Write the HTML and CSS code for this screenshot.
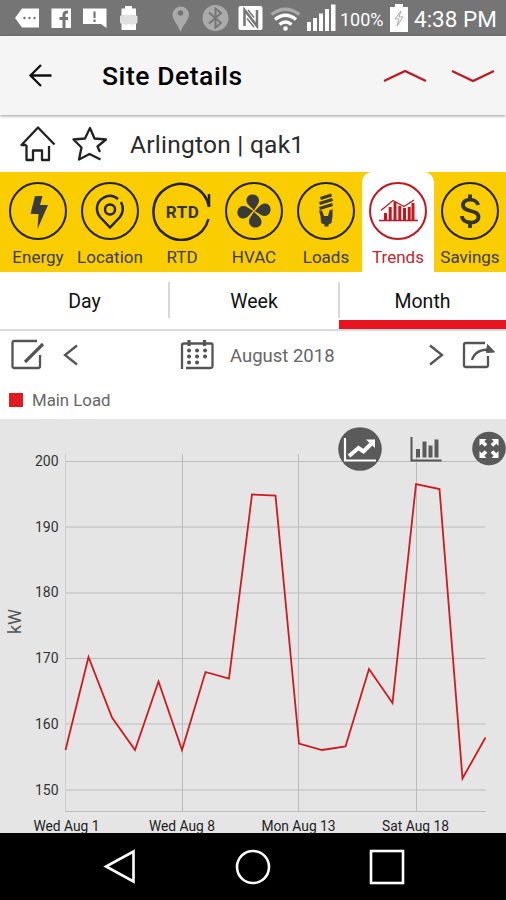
FILE: index.html
```html
<!DOCTYPE html>
<html lang="en">
<head>
  <meta charset="UTF-8">
  <meta name="viewport" content="width=device-width, initial-scale=1">
  <title>Site Details</title>
  <link rel="stylesheet" href="styles.css">
</head>
<body>
  <div class="status-bar">
    <svg class="status-notes" width="140" height="36" viewBox="0 0 140 36">
      <path d="M15 18 22 8.500H39V27.500H22Z" fill="#fff"/>
      <g fill="#757575"><circle cx="24.500" cy="18" r="1.200"/><circle cx="29.500" cy="18" r="1.200"/><circle cx="34.500" cy="18" r="1.200"/></g>
      <rect x="51.500" y="8.500" width="19.500" height="19.500" fill="#fff"/>
      <path d="M64 28V14.500Q64 12 68 12M59.500 18.500H68" fill="none" stroke="#757575" stroke-width="3"/>
      <path d="M83 8.500H106.500V28L101 24H83Z" fill="#fff"/>
      <path d="M94.500 11.500V18M94.500 19.500V22" stroke="#757575" stroke-width="2.200"/>
      <path d="M125 6H132V8.500H136V30H121.500V8.500H125Z" fill="#fff"/>
      <path d="M120 16Q124 13.500 128.500 15Q133 13.500 137.500 16V23Q133 26 128.500 24Q124 26 120 23Z" fill="#e0e0e0"/>
    </svg>
    <svg class="status-signals" width="168" height="36" viewBox="170 0 168 36">
      <path d="M180.500 32C178 25 172.500 20 172.500 14A8.300 8.300 0 0 1 189 14C189 20 183 25 180.500 32Z" fill="#aaa"/>
      <circle cx="180.500" cy="13" r="2.800" fill="#757575"/>
      <circle cx="215.500" cy="18" r="13" fill="#aaa"/>
      <path d="M209 12.500 221 23 215.500 27.500V8.500L221 13 209 23.500" fill="none" stroke="#757575" stroke-width="2"/>
      <rect x="238.500" y="6" width="24" height="24" rx="2" fill="#fff"/>
      <path d="M244.500 26V10L257 26V10" fill="none" stroke="#757575" stroke-width="2.500"/>
      <path d="M248 10 254 17.500M247 18.500 254 27" stroke="#757575" stroke-width="1.500"/>
      <g fill="none" stroke="#fff" stroke-width="3.200">
        <path d="M271.500 14.500Q285.500 4 299.500 14.500" stroke="#aaa"/>
        <path d="M275 19.500Q285.500 11 296 19.500M279.500 24.500Q285.500 19.500 291.500 24.500"/>
      </g>
      <circle cx="285.500" cy="28.500" r="2.300" fill="#fff"/>
      <g fill="#fff"><rect x="307" y="22" width="4" height="9"/><rect x="313" y="18" width="4" height="13"/><rect x="319" y="13.500" width="4" height="17.500"/><rect x="325" y="9" width="4" height="22"/><rect x="331" y="4.500" width="4.500" height="26.500"/></g>
    </svg>
    <span class="battery-level">100%</span>
    <svg class="battery" width="18" height="28" viewBox="0 0 18 28">
      <path d="M5 0H13V3H18V28H0V3H5Z" fill="#fff"/>
      <path d="M11 7 5 15H9L7 22 13 13H9Z" fill="none" stroke="#aaa"/>
    </svg>
    <span class="clock">4:38 PM</span>
  </div>

  <header class="app-bar">
    <svg class="back" width="24" height="24" viewBox="0 0 24 24"><path d="M23.500 11.500H2.500M13 1 2.500 11.500 13 22"/></svg>
    <h1>Site Details</h1>
    <svg class="arrow" width="44" height="14" viewBox="0 0 44 14"><path d="M1 12 22 2 43 12"/></svg>
    <svg class="arrow" width="44" height="14" viewBox="0 0 44 14"><path d="M1 2 22 12 43 2"/></svg>
  </header>

  <div class="site">
    <svg width="36" height="36" viewBox="0 0 36 36"><path d="M6.500 19H1.500L18 1.500 34.500 18.500M6.500 19V34H13V24.500H22V34H29V20"/></svg>
    <svg width="36" height="36" viewBox="0 0 36 36"><path d="M28 26 25.500 20.500 34 13.500 22.500 12.500 18 2 13 12.500 1.500 13.500 9.500 21.500 7 33.500 17.500 28 28.500 33.500"/></svg>
    <span class="site-name">Arlington | qak1</span>
  </div>

  <nav class="tabs">
    <div class="tab">
      <svg viewBox="0 0 60 60"><circle cx="30" cy="30" r="28"/><path class="fill" d="M27 15H34.500L32 24H40L29.500 48 30.500 33H22.500Z"/></svg>
      <span>Energy</span>
    </div>
    <div class="tab">
      <svg viewBox="0 0 60 60"><circle cx="30" cy="30" r="28"/><path class="thick" d="M38 18Q31 12 23 17C15 22 16 31 20 36L30 46.500 40 36Q45 29 41 21"/><circle class="thick" cx="30" cy="28.500" r="5"/></svg>
      <span>Location</span>
    </div>
    <div class="tab">
      <svg viewBox="0 0 60 60"><path class="thick" d="M57 26V13M57 26A28 28 0 1 0 56.500 38"/><text x="30.500" y="36.500" text-anchor="middle">RTD</text></svg>
      <span>RTD</span>
    </div>
    <div class="tab">
      <svg viewBox="0 0 60 60"><circle cx="30" cy="30" r="28"/>
        <g class="fill"><path id="blade" d="M30 29.500C28 26 22 24 22.500 18.500C23 12.500 32 11.500 34.500 17C36.500 22 32 25 30 29.500Z"/><use href="#blade" transform="rotate(90 30 30)"/><use href="#blade" transform="rotate(180 30 30)"/><use href="#blade" transform="rotate(270 30 30)"/></g>
      </svg>
      <span>HVAC</span>
    </div>
    <div class="tab">
      <svg viewBox="0 0 60 60"><circle cx="30" cy="30" r="28"/><path class="coil" d="M24.500 17.500 35.500 14M23.500 22.500 36.500 18.500M23.500 27.500 36.500 23.500"/><path class="fill" d="M23 29.500H26L28 35H32L33.500 29.500 36.500 28V35L35.500 42 32.500 43.500V45.500H28.500V43.500L25 42 24.500 35Z"/></svg>
      <span>Loads</span>
    </div>
    <div class="tab active">
      <svg viewBox="0 0 60 60"><circle cx="30" cy="30" r="28"/><path class="bars" d="M17.500 39V32M22.200 39V26M27 39V21M31.800 39V25M36.500 39V27M41.200 39V26M45 39V22"/><path class="thin" d="M11 39.500H50M13 29.500 25 19.500 36 25.500 46 19"/></svg>
      <span>Trends</span>
    </div>
    <div class="tab">
      <svg viewBox="0 0 60 60"><circle cx="30" cy="30" r="28"/><path class="dollar" d="M38 24C37 17 23 16.500 23 24C23 32 38.500 28 38.500 36C38.500 44 22 43 22 35M30 13.500V19M30 41V47"/></svg>
      <span>Savings</span>
    </div>
  </nav>

  <div class="periods">
    <div class="period">Day</div>
    <div class="period">Week</div>
    <div class="period selected">Month</div>
  </div>

  <div class="date-row">
    <svg class="edit" width="34" height="32" viewBox="0 0 34 32"><path d="M26 2H3Q1.500 2 1.500 4V27Q1.500 29 3.500 29H27Q29 29 29 27V16"/><path class="pen" d="M14 23 32 5"/></svg>
    <svg class="prev" width="16" height="22" viewBox="0 0 16 22"><path d="M14 1.500 2 11 14 20.500"/></svg>
    <svg class="calendar" width="34" height="32" viewBox="0 0 34 32"><path d="M2 30V6Q2 4.500 4 4.500H31Q32.500 4.500 32.500 6V27Q32.500 29 30 29H6"/><path class="pen" d="M9 1V7M24.500 1V7"/><path class="dots" d="M9 11.500h.1M17 11.500h.1M25 11.500h.1M9 17.500h.1M17 17.500h.1M25 17.500h.1M9 23.500h.1M17 23.500h.1"/></svg>
    <span class="date">August 2018</span>
    <svg class="next" width="16" height="22" viewBox="0 0 16 22"><path d="M2 1.500 14 11 2 20.500"/></svg>
    <svg class="share" width="34" height="28" viewBox="0 0 34 28"><path d="M23 2H3.500Q2 2 2 4V24Q2 26 4 26H24Q26 26 26 24V15"/><path d="M10 19Q13 8 29 8.500"/><path class="tip" d="M25.500 3.500 32.500 11 24.500 11.500Z"/></svg>
  </div>

  <div class="legend"><i></i>Main Load</div>

  <div class="chart">
    <svg width="506" height="414" viewBox="0 419 506 414">
      <g class="grid">
        <path d="M65.500 461.500H485.500M65.500 527H485.500M65.500 593H485.500M65.500 658.500H485.500M65.500 724H485.500M65.500 790H485.500M65.500 811.500H485.500"/>
        <path d="M182.500 454V812M298.500 454V812M416.500 454V812"/>
        <path class="axis" d="M65.500 454V812"/>
      </g>
      <g class="y-labels">
        <text x="58.500" y="466">200</text>
        <text x="58.500" y="531.500">190</text>
        <text x="58.500" y="597">180</text>
        <text x="58.500" y="663">170</text>
        <text x="58.500" y="728.500">160</text>
        <text x="58.500" y="794.500">150</text>
      </g>
      <text class="unit" transform="translate(21 621.500) rotate(-90)">kW</text>
      <g class="x-labels">
        <text x="66.500" y="831">Wed Aug 1</text>
        <text x="182" y="831">Wed Aug 8</text>
        <text x="298.500" y="831">Mon Aug 13</text>
        <text x="415.500" y="831">Sat Aug 18</text>
      </g>
      <polyline class="series" points="65.500,750 88.500,657 112,717.500 135,750 158.500,681.500 182,750 205.500,672 229,678.500 252,494.500 275.500,495.500 299,743.500 322,750 345.500,746.500 369,669 392.500,703 416,484 439.500,489 462.500,778.500 485.500,737.500"/>
      <circle cx="360" cy="449" r="21.800" fill="#5a5a5a"/>
      <path d="M345 438V460.500H376" fill="none" stroke="#fff" stroke-width="2.200"/>
      <path d="M349 456 358.500 448 363.500 451.500 371 444" fill="none" stroke="#fff" stroke-width="4"/>
      <path d="M366 439.500H375V448Z" fill="#fff"/>
      <path d="M411.500 437V460.500H441.500" fill="none" stroke="#555" stroke-width="2"/>
      <path d="M418 457.500V449M424.500 457.500V441.500M430.500 457.500V445.500M436.500 457.500V439.500" stroke="#5a5a5a" stroke-width="4"/>
      <circle cx="489" cy="448.500" r="16.800" fill="#5a5a5a"/>
      <g class="expand">
        <path id="corner" d="M479.500 439H486.500L484.300 441.200 487.300 444.200 484.700 446.800 481.700 443.800 479.500 446Z"/>
        <use href="#corner" transform="rotate(90 489 448.500)"/>
        <use href="#corner" transform="rotate(180 489 448.500)"/>
        <use href="#corner" transform="rotate(270 489 448.500)"/>
      </g>
    </svg>
  </div>

  <footer class="nav-bar">
    <svg width="36" height="36" viewBox="0 0 36 36"><path d="M32.500 2.500V32.500L5 17.500Z"/></svg>
    <svg width="36" height="36" viewBox="0 0 36 36"><circle cx="18" cy="18" r="16"/></svg>
    <svg width="36" height="36" viewBox="0 0 36 36"><rect x="2" y="2" width="32" height="32"/></svg>
  </footer>
</body>
</html>
```

FILE: styles.css
```css
* { box-sizing: border-box; }
body {
  margin: 0;
  width: 506px;
  height: 900px;
  display: flex;
  flex-direction: column;
  overflow: hidden;
  background: #fff;
  font-family: Roboto, sans-serif;
}
svg { display: block; flex: none; }

.status-bar {
  height: 36px;
  display: flex;
  align-items: center;
  background: #757575;
  color: #fff;
  white-space: nowrap;
}
.status-signals { margin-left: 30px; }
.battery-level { width: 53px; padding: 2px 0 0 2px; font-size: 18px; }
.battery { margin-left: -1px; }
.clock { padding: 2px 0 0 6px; font-size: 22.500px; }

.app-bar {
  height: 79px;
  display: flex;
  align-items: center;
  padding: 0 11px 0 28px;
  background: #f5f5f5;
  box-shadow: 0 1px 3px rgba(0,0,0,0.4);
}
.app-bar h1 {
  flex: 1;
  margin: 0 0 0 50px;
  font-size: 26.500px;
  font-weight: 500;
  letter-spacing: 0.55px;
}
.app-bar path { fill: none; stroke: #111; stroke-width: 2.300; }
.app-bar .arrow path { stroke: #c4161c; stroke-width: 2.200; }
.arrow + .arrow { margin-left: 24px; }

.site {
  height: 57px;
  display: flex;
  align-items: center;
  padding: 0 20px;
  gap: 16px;
}
.site path { fill: none; stroke: #222; stroke-width: 2.300; stroke-linejoin: round; }
.site-name {
  margin: 2px 0 0 6px;
  font-size: 24.500px;
  letter-spacing: 0.25px;
  color: #2b2b2b;
}

.tabs {
  height: 100px;
  display: grid;
  grid-template-columns: repeat(7, 72px);
  padding-left: 2px;
  background: #facd00;
  color: #3b3b3b;
}
.tab {
  display: flex;
  flex-direction: column;
  align-items: center;
  padding-top: 9px;
  font-size: 17px;
}
.tab svg { width: 60px; height: 60px; fill: none; stroke: #222; stroke-width: 2; }
.tab span { margin-top: 6px; line-height: 20px; }
.tab .fill { fill: #3a3a3a; stroke: none; }
.tab .thick { stroke-width: 2.500; }
.tab .coil { stroke: #3a3a3a; stroke-width: 3; }
.tab .dollar { stroke: #333; stroke-width: 3.800; }
.tab text {
  fill: #333;
  stroke: none;
  font-size: 17px;
  font-weight: 700;
  letter-spacing: 0.5px;
}
.tab.active { background: #fff; color: #c4262c; border-radius: 10px 10px 0 0; }
.tab.active svg { stroke: #c4161c; }
.tab .bars { stroke-width: 3; }
.tab .thin { stroke-width: 1.300; }

.periods {
  height: 59px;
  display: grid;
  grid-template-columns: 169px 170px 167px;
  border-bottom: 2px solid #dcdcdc;
}
.period {
  position: relative;
  text-align: center;
  line-height: 59px;
  font-size: 19.500px;
  color: #111;
}
.period + .period::before {
  content: "";
  position: absolute;
  left: -1px;
  top: 10px;
  width: 2px;
  height: 36px;
  background: #d8d8d8;
}
.period.selected { height: 57px; border-bottom: 9px solid #e81420; }

.date-row {
  height: 50px;
  display: flex;
  align-items: center;
  padding: 0 10px 2px 11px;
}
.date-row path { fill: none; stroke: #555; stroke-width: 2.300; }
.date-row .pen { stroke-width: 3.200; }
.date-row .dots { stroke-width: 4; stroke-linecap: round; }
.date-row .tip { fill: #555; stroke-width: 1; }
.prev { margin-left: 18px; }
.calendar { margin-left: 101px; }
.date { margin: 2px 0 0 16px; font-size: 18.500px; color: #666; }
.next { margin-left: auto; }
.share { margin-left: 18px; }

.legend {
  height: 38px;
  display: flex;
  align-items: center;
  padding: 0 9px;
  gap: 9px;
  font-size: 16.800px;
  color: #666;
}
.legend i { width: 14px; height: 14px; background: #e2191f; }

.chart { height: 414px; background: #e5e5e5; }
.grid { fill: none; stroke: #bcbcbc; stroke-width: 1; }
.grid .axis { stroke: #cfcfcf; }
.chart text { fill: #333; font-size: 14px; }
.y-labels { text-anchor: end; }
.x-labels { text-anchor: middle; }
.chart .x-labels text { font-size: 13.800px; fill: #222; }
.chart .unit { font-size: 18px; fill: #555; text-anchor: middle; }
.series { fill: none; stroke: #cf1a20; stroke-width: 1.800; }
.expand { fill: #fff; }

.nav-bar {
  height: 67px;
  display: flex;
  justify-content: center;
  gap: 98px;
  padding-top: 16px;
  background: #000;
}
.nav-bar svg { fill: none; stroke: #fff; stroke-width: 2.600; }
```
